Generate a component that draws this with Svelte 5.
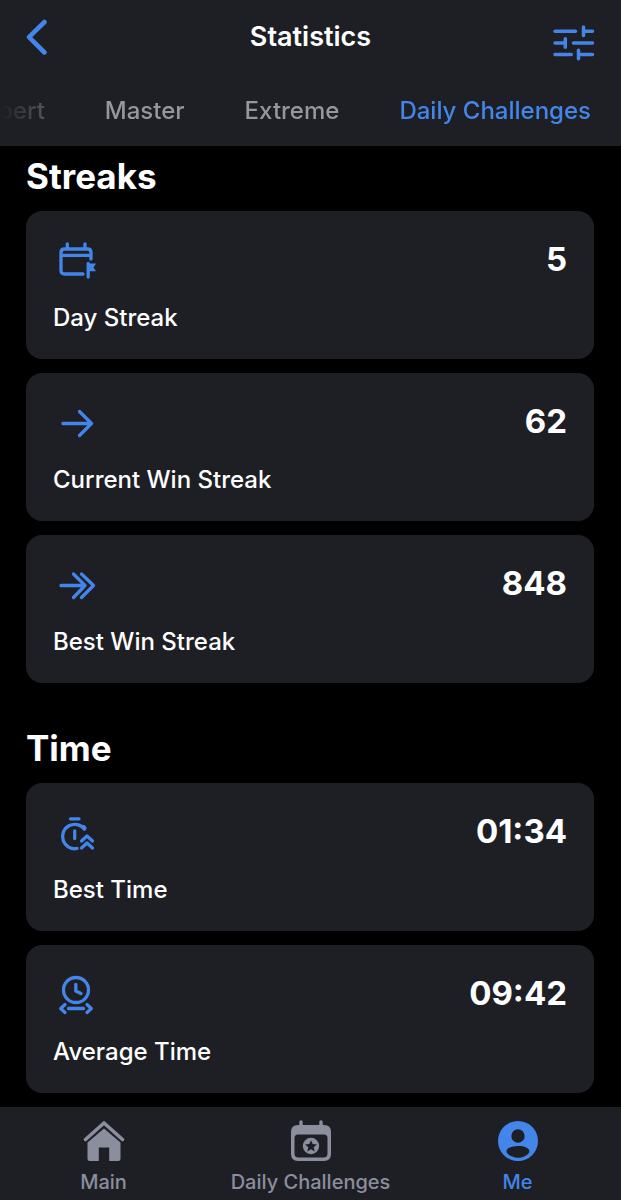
<script lang="ts">
	type Stat = { icon: string; label: string; value: string };
	type Section = { title: string; stats: Stat[] };

	const tabs = ['Expert', 'Master', 'Extreme', 'Daily Challenges'];
	let activeTab = $state('Daily Challenges');

	const navItems = ['Main', 'Daily Challenges', 'Me'];
	let activeNav = $state('Me');

	const sections: Section[] = [
		{
			title: 'Streaks',
			stats: [
				{ icon: 'calendar', label: 'Day Streak', value: '5' },
				{ icon: 'arrow', label: 'Current Win Streak', value: '62' },
				{ icon: 'double-arrow', label: 'Best Win Streak', value: '848' }
			]
		},
		{
			title: 'Time',
			stats: [
				{ icon: 'stopwatch', label: 'Best Time', value: '01:34' },
				{ icon: 'average', label: 'Average Time', value: '09:42' }
			]
		}
	];
</script>

<div class="page">
	<header class="header">
		<div class="title-bar">
			<button class="icon-btn" aria-label="Back">
				<svg width="24" height="40" viewBox="0 0 24 40">
					<path d="M19.5 5 4 20.200l15.500 15.300" stroke-width="4.600" />
				</svg>
			</button>
			<h1>Statistics</h1>
			<button class="icon-btn" aria-label="Filters">
				<svg width="44" height="36" viewBox="0 0 44 36">
					<path
						d="M3 6.300H23.500M31.500 2v8.600M31.500 6.300h9M3 18h10M13.300 13.700v8.600M21.500 18h19M3 29.500h16.300M26.500 25.200v8.600M26.500 29.500h14"
						stroke-width="3.500"
					/>
				</svg>
			</button>
		</div>
		<div class="tabs" role="tablist">
			{#each tabs as tab}
				<button
					class="tab"
					class:active={tab === activeTab}
					role="tab"
					aria-selected={tab === activeTab}
					onclick={() => (activeTab = tab)}
				>
					{tab}
				</button>
			{/each}
		</div>
	</header>

	<main class="content">
		{#each sections as section}
			<section>
				<h2>{section.title}</h2>
				<div class="cards">
					{#each section.stats as stat}
						<article class="card">
							<div class="card-top">
								<svg width="48" height="48" viewBox="0 0 48 48">
									{#if stat.icon === 'calendar'}
										<path d="M30 38H11.5Q8 38 8 34.5V16.5Q8 13 11.5 13H34.5Q38 13 38 16.5V23M8 19.3H38M14.3 8v5M32 8v5M35.2 27.5v13.5" />
										<path class="solid" d="M35 27.5h8l-2.500 3.900 2.500 3.900H35z" />
									{:else if stat.icon === 'arrow'}
										<path d="M10 25.5H38.5M26.500 13.500l12 12-12 12" />
									{:else if stat.icon === 'double-arrow'}
										<path d="M8 25.5H32M20.5 14 32 25.500l-11.500 12M28.500 14l12 11.500-12 12" />
									{:else if stat.icon === 'stopwatch'}
										<path d="M17.5 10.8H26M24 40.500A12.200 12.200 0 1 1 31.500 21.200M30.500 18.500l1.500 1.500M21.700 23v7.500" />
										<path d="M28.500 33l5.500-5 5.500 5M28.500 40l5.500-5 5.500 5" />
									{:else}
										<circle cx="23" cy="20" r="12.5" />
										<path d="M22.800 14.500V21l5.200 2.500M15.500 38.500h15M12 34.500l-4.300 4 4.300 4M34 34.500l4.300 4-4.300 4" />
									{/if}
								</svg>
								<span class="value">{stat.value}</span>
							</div>
							<p class="label">{stat.label}</p>
						</article>
					{/each}
				</div>
			</section>
		{/each}
	</main>

	<nav class="bottom-nav">
		{#each navItems as item}
			<button
				class="nav-item"
				class:active={item === activeNav}
				aria-current={item === activeNav ? 'page' : undefined}
				onclick={() => (activeNav = item)}
			>
				<svg width="44" height="44" viewBox="0 0 44 44">
					{#if item === 'Main'}
						<path d="M3.5 20.5 22 4l18.5 16.5" stroke-width="3.6" />
						<path
							class="solid"
							d="M22 9.500 38.500 23.500v16q0 2.500-2.500 2.500H27.200V28.500h-10.400V42H8q-2.500 0-2.500-2.500V23.500z"
						/>
					{:else if item === 'Daily Challenges'}
						<path d="M12 3v6M32 3v6" stroke-width="3.4" />
						<path
							class="solid"
							fill-rule="evenodd"
							d="M9 6h26q7 0 7 7v22q0 7-7 7H9q-7 0-7-7V13q0-7 7-7zM9 15.500q-3.500 0-3.500 3.500v15.500q0 4 4 4h25q4 0 4-4V19q0-3.500-3.500-3.500z"
						/>
						<path
							class="solid"
							fill-rule="evenodd"
							d="M22 18.800a8.200 8.200 0 1 0 0 16.400a8.200 8.200 0 1 0 0-16.400zM22 21.200l1.700 3.900 4.200.4-3.200 2.800 1 4.200-3.700-2.200-3.700 2.200 1-4.200-3.200-2.800 4.200-.4z"
						/>
					{:else}
						<path
							class="solid"
							fill-rule="evenodd"
							d="M22 2a20 20 0 1 0 0 40a20 20 0 1 0 0-40zM22 10.300a6.700 6.700 0 1 1 0 13.400a6.700 6.700 0 1 1 0-13.400zM22 27c6.500 0 11.500 2 11.500 5.500 0 2.500-5.500 6.300-11.500 6.300s-11.500-3.800-11.500-6.300C10.500 29 15.500 27 22 27z"
						/>
					{/if}
				</svg>
				<span>{item}</span>
			</button>
		{/each}
	</nav>
</div>

<style>
	:global(body) {
		margin: 0;
		background: #000;
	}

	.page {
		min-height: 100vh;
		display: flex;
		flex-direction: column;
		font-family: Inter, 'Liberation Sans', sans-serif;
		color: #fff;
		background: #000;
	}

	button {
		padding: 0;
		border: 0;
		background: none;
		font: inherit;
		color: inherit;
		cursor: pointer;
	}

	svg {
		display: block;
		fill: none;
		stroke: currentColor;
		stroke-width: 3.3;
		stroke-linecap: round;
		stroke-linejoin: round;
	}

	.solid {
		fill: currentColor;
		stroke: none;
	}

	.header {
		background: #1e1f25;
	}

	.title-bar {
		display: grid;
		grid-template-columns: 1fr auto 1fr;
		align-items: center;
		height: 74px;
		padding: 0 25px;
	}

	.icon-btn {
		color: #4485ea;
		justify-self: start;
	}

	.icon-btn:last-child {
		justify-self: end;
		padding-top: 12px;
	}

	h1 {
		margin: 0;
		font-size: 27px;
		line-height: 32px;
		font-weight: 600;
	}

	.tabs {
		display: flex;
		justify-content: flex-end;
		gap: 60px;
		height: 72px;
		padding-right: 30px;
		overflow: hidden;
		mask-image: linear-gradient(to right, transparent, #000 100px);
	}

	.tab {
		flex-shrink: 0;
		font-size: 24px;
		font-weight: 500;
		color: #96979d;
	}

	.tab.active,
	.nav-item.active {
		color: #4485ea;
	}

	.content {
		flex: 1;
		display: flex;
		flex-direction: column;
		gap: 43px;
		padding: 8px 27px 13px 26px;
	}

	h2 {
		margin: 0 0 13px;
		font-size: 35px;
		line-height: 44px;
		font-weight: 700;
	}

	.cards {
		display: flex;
		flex-direction: column;
		gap: 14px;
	}

	.card {
		padding: 25px 27px;
		border-radius: 16px;
		background: #1e1f25;
	}

	.card-top {
		display: flex;
		justify-content: space-between;
		color: #4485ea;
	}

	.value {
		font-size: 33px;
		line-height: 46px;
		font-weight: 700;
		color: #fff;
	}

	.label {
		margin: 18px 0 0;
		font-size: 24px;
		line-height: 32px;
		font-weight: 500;
	}

	.bottom-nav {
		display: grid;
		grid-template-columns: repeat(3, 1fr);
		background: #1e1f25;
	}

	.nav-item {
		display: flex;
		flex-direction: column;
		align-items: center;
		gap: 7px;
		padding: 12px 0 6px;
		font-size: 20px;
		line-height: 24px;
		font-weight: 500;
		color: #8b8e9d;
	}
</style>
